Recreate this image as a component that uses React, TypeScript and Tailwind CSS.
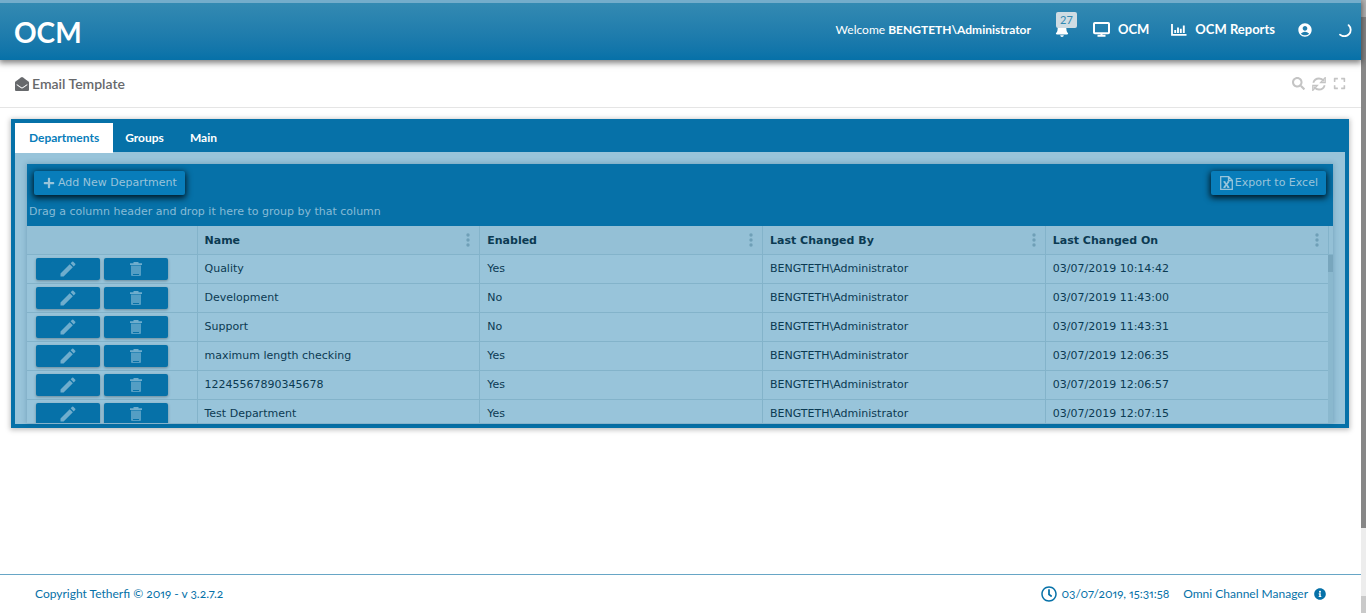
import React from "react";
import { FaBell, FaEnvelopeOpen, FaSearch, FaExpand, FaPlus, FaRegClock, FaInfoCircle } from "react-icons/fa";
import { MdAccountCircle, MdEdit } from "react-icons/md";

type Department = { name: string; enabled: boolean; changedOn: string };

const departments: Department[] = [
  { name: "Quality", enabled: true, changedOn: "03/07/2019 10:14:42" },
  { name: "Development", enabled: false, changedOn: "03/07/2019 11:43:00" },
  { name: "Support", enabled: false, changedOn: "03/07/2019 11:43:31" },
  { name: "maximum length checking", enabled: true, changedOn: "03/07/2019 12:06:35" },
  { name: "12245567890345678", enabled: true, changedOn: "03/07/2019 12:06:57" },
  { name: "Test Department", enabled: true, changedOn: "03/07/2019 12:07:15" },
];

const columns = ["Name", "Enabled", "Last Changed By", "Last Changed On"];

function MonitorIcon() {
  return (
    <svg viewBox="0 0 17 15" className="h-[15px] w-[17px]" fill="none" stroke="currentColor" strokeWidth="2">
      <rect x="1" y="1" width="15" height="10.2" rx="0.8" />
      <path d="M8.5 11.5v2M4.5 13.8h8" />
    </svg>
  );
}

function ChartIcon() {
  return (
    <svg viewBox="0 0 16 12" className="h-3 w-4" fill="none" stroke="currentColor">
      <path strokeWidth="1.8" d="M1 0v10.8h14.5" />
      <path strokeWidth="1.9" d="M4.2 9V6M7 9V3.5M9.8 9V4.8M12.8 9V1.5" />
    </svg>
  );
}

function SpinnerIcon() {
  return (
    <svg viewBox="0 0 14 14" className="size-[14px]" fill="none" stroke="currentColor" strokeWidth="1.8" strokeLinecap="round">
      <path d="M10.6 2.2A6 6 0 0 1 2 11.6" />
    </svg>
  );
}

function RefreshIcon() {
  return (
    <svg viewBox="0 0 14 14" className="size-[14px]" fill="none" stroke="currentColor" strokeWidth="1.8">
      <path d="M1.3 5.8C2.2 2.8 4.4 1.5 7 1.5c2 0 3.6.8 5 2.6M12.7 8.2c-.9 3-3.1 4.3-5.7 4.3-2 0-3.6-.8-5-2.6" />
      <path strokeWidth="1.3" d="M13.2.6v4.9H8.6zM.8 13.4V8.5h4.6z" />
    </svg>
  );
}

function ExcelIcon() {
  return (
    <svg viewBox="0 0 13 14" className="h-[14px] w-[13px]" fill="none" stroke="currentColor" strokeWidth="1.3">
      <path d="M.7.7h8l3.6 3.6v9H.7zM8.5.7v3.8h3.8" />
      <path strokeWidth="1.7" d="M4.2 5.8l4.4 5.6M8.6 5.8l-4.4 5.6" />
      <path strokeWidth="1" d="M3.4 5.7h2M7.4 5.7h2M3.4 11.5h2M7.4 11.5h2" />
    </svg>
  );
}

function TrashIcon() {
  return (
    <svg viewBox="0 0 12 14" className="h-[14px] w-3" fill="currentColor">
      <path d="M3.5 0h5v1.2H12V3H0V1.2h3.5z" />
      <path fillOpacity="0.75" d="M1 3.4h10V13a1 1 0 0 1-1 1H2a1 1 0 0 1-1-1z" />
      <path className="fill-[#0671a8]" d="M3 12h6v1H3z" />
    </svg>
  );
}

function MenuDots() {
  return (
    <svg viewBox="0 0 4 14" className="h-[14px] w-1" fill="currentColor">
      <circle cx="2" cy="2" r="1.7" />
      <circle cx="2" cy="7" r="1.7" />
      <circle cx="2" cy="12" r="1.7" />
    </svg>
  );
}

function Header() {
  return (
    <header className="relative flex h-[60px] items-center justify-between border-t-[3px] border-[#74adcb] bg-linear-to-b from-[#338ab2] to-[#0671a8] pr-[9px] pl-[14px] text-white shadow-[0_2px_6px_1px_rgba(0,0,0,0.5)]">
      <h1 className="text-[28px] leading-8 font-bold">OCM</h1>
      <nav className="flex items-center pb-1 text-[13px] font-bold">
        <p className="mr-6 text-xs">
          <span className="font-normal">Welcome </span>BENGTETH\Administrator
        </p>
        <button aria-label="Notifications" className="relative mr-6">
          <FaBell className="size-[14px]" />
          <span className="absolute -top-[11px] left-px h-4 w-[21px] rounded-[2px] bg-[#cfdce3] text-center text-[11px] leading-4 font-normal text-[#338ab2]">27</span>
        </button>
        <a href="#ocm" className="mr-[22px] flex items-center gap-2"><MonitorIcon />OCM</a>
        <a href="#reports" className="mr-[22px] flex items-center gap-2"><ChartIcon />OCM Reports</a>
        <button aria-label="Account" className="mr-[25px]"><MdAccountCircle className="size-4" /></button>
        <SpinnerIcon />
      </nav>
    </header>
  );
}

function Toolbar() {
  const button = "flex h-6 items-center rounded-[2px] bg-[#087dba] pr-2 pl-[9px] text-[11px] text-[#98c4da] shadow-[0_2px_6px_1px_rgba(0,0,0,0.8)]";
  return (
    <div className="flex h-[62px] flex-col justify-between bg-[#0671a8] text-[#86bbd6]">
      <div className="flex items-center justify-between px-[7px] pt-[7px]">
        <button className={button + " gap-[3px]"}><FaPlus className="size-3" />Add New Department</button>
        <button className={button + " gap-[2px]"}><ExcelIcon />Export to Excel</button>
      </div>
      <p className="px-[2px] pb-[6px] text-[11px] leading-4">Drag a column header and drop it here to group by that column</p>
    </div>
  );
}

function DepartmentTable() {
  const action = "flex h-[22px] w-16 items-center justify-center rounded-[2px] bg-[#0671a8] text-[#6fadcd] shadow-[0_1px_3px_rgba(0,0,0,0.3)]";
  const cell = "border-l border-[#83b3ca] px-[7px] pt-[2px]";
  return (
    <div className="flex h-[197px] overflow-hidden">
      <div className="min-w-0 flex-1">
        <table className="w-full table-fixed border-collapse text-left text-[11px] text-[#0b3a52]">
          <thead>
            <tr className="h-[28px] border-b border-[#83b3ca] bg-[#94c0d6]">
              <th className="w-[170px]" aria-label="Actions" />
              {columns.map((title) => (
                <th key={title} className="border-l border-[#83b3ca] pr-[9px] pl-[7px]">
                  <div className="flex items-center justify-between">
                    <span className="pt-[2px]">{title}</span>
                    <button aria-label={title + " menu"} className="text-[#6f9fb7]"><MenuDots /></button>
                  </div>
                </th>
              ))}
            </tr>
          </thead>
          <tbody>
            {departments.map((d) => (
              <tr key={d.name} className="h-[29px] border-b border-[#83b3ca]">
                <td className="pl-[9px]">
                  <div className="flex gap-1">
                    <button aria-label={"Edit " + d.name} className={action}><MdEdit className="size-5" /></button>
                    <button aria-label={"Delete " + d.name} className={action}><TrashIcon /></button>
                  </div>
                </td>
                <td className={cell}>{d.name}</td>
                <td className={cell}>{d.enabled ? "Yes" : "No"}</td>
                <td className={cell}>BENGTETH\Administrator</td>
                <td className={cell}>{d.changedOn}</td>
              </tr>
            ))}
          </tbody>
        </table>
      </div>
      <div className="w-[5px] bg-[#8ab8ce]">
        <div className="h-[29px] border-b border-l border-[#83b3ca] bg-[#94c0d6]" />
        <div className="h-[17px] bg-[#78a6bd]" />
      </div>
    </div>
  );
}

function Panel() {
  return (
    <section className="mt-[11px] mr-3 ml-[11px] border-4 border-[#0671a8] bg-[#98c4da] shadow-[0_1px_5px_1px_rgba(0,0,0,0.25)]">
      <div role="tablist" className="flex h-[29px] bg-[#0671a8] text-xs font-bold text-white">
        <button role="tab" aria-selected="true" className="h-[30px] bg-white px-[14px] text-[#087dba]">Departments</button>
        <button role="tab" aria-selected="false" className="px-3">Groups</button>
        <button role="tab" aria-selected="false" className="px-[14px]">Main</button>
      </div>
      <div className="px-3 pt-3 pb-px">
        <div className="font-['DejaVu_Sans',sans-serif] shadow-[0_0_5px_1px_rgba(0,60,90,0.2)]">
          <Toolbar />
          <DepartmentTable />
        </div>
      </div>
    </section>
  );
}

export default function App() {
  return (
    <div className="flex min-h-screen bg-white font-[Lato,sans-serif]">
      <div className="flex min-w-0 flex-1 flex-col">
        <Header />
        <div className="flex h-12 items-center justify-between border-b border-[#e5e5e5] px-[15px]">
          <h2 className="flex items-center gap-[3px] text-sm font-semibold text-[#67696c]"><FaEnvelopeOpen className="size-[14px]" />Email Template</h2>
          <div className="flex items-center gap-[7px] text-[#c4c4c4]">
            <button aria-label="Search"><FaSearch className="size-[13px]" /></button>
            <button aria-label="Refresh"><RefreshIcon /></button>
            <button aria-label="Full screen"><FaExpand className="size-[13px]" /></button>
          </div>
        </div>
        <main className="flex-1"><Panel /></main>
        <footer className="flex h-[39px] items-center justify-between border-t border-[#67a6c6] px-[35px] text-xs text-[#0671a8] oldstyle-nums proportional-nums">
          <p>Copyright Tetherfi © 2019 - v 3.2.7.2</p>
          <div className="flex items-center">
            <FaRegClock className="mr-1 size-4" />
            <time className="mr-[14px]">03/07/2019, 15:31:58</time>
            <span className="mr-[6px]">Omni Channel Manager</span>
            <FaInfoCircle className="size-3" />
          </div>
        </footer>
      </div>
      <div className="flex w-[5px] flex-col bg-[#ededed]">
        <div className="h-[17px] bg-[#b5b5b5]" />
        <div className="h-[511px] bg-[#878787]" />
        <div className="mt-auto h-[17px] bg-[#cacaca]" />
      </div>
    </div>
  );
}
